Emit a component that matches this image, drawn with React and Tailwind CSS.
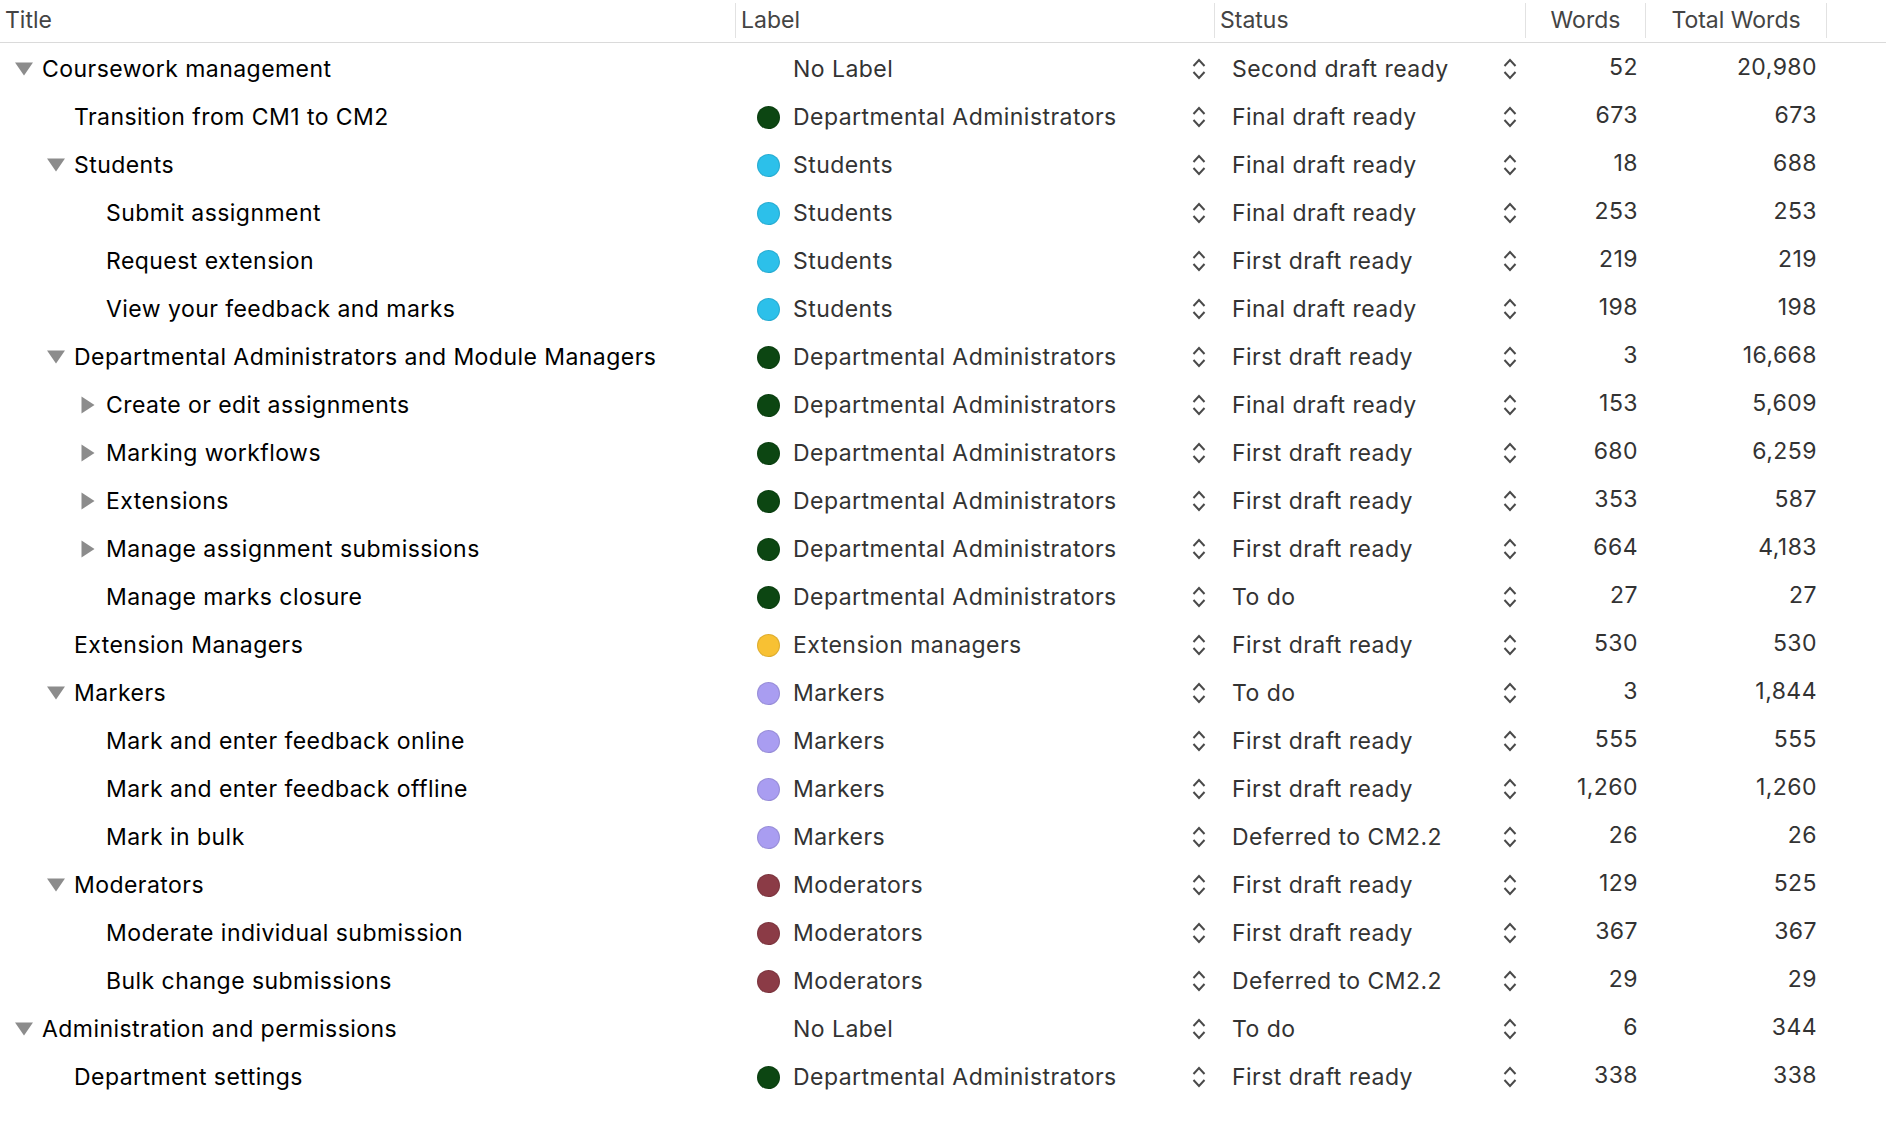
const LABELS = {
  none: { name: 'No Label', color: null },
  admin: { name: 'Departmental Administrators', color: '#0c4612' },
  students: { name: 'Students', color: '#2cc0ea' },
  ext: { name: 'Extension managers', color: '#f8c133' },
  markers: { name: 'Markers', color: '#a99df1' },
  mods: { name: 'Moderators', color: '#8b3b46' },
}

const ROWS = [
  { title: 'Coursework management', level: 0, toggle: 'open', label: 'none', status: 'Second draft ready', words: '52', total: '20,980' },
  { title: 'Transition from CM1 to CM2', level: 1, label: 'admin', status: 'Final draft ready', words: '673', total: '673' },
  { title: 'Students', level: 1, toggle: 'open', label: 'students', status: 'Final draft ready', words: '18', total: '688' },
  { title: 'Submit assignment', level: 2, label: 'students', status: 'Final draft ready', words: '253', total: '253' },
  { title: 'Request extension', level: 2, label: 'students', status: 'First draft ready', words: '219', total: '219' },
  { title: 'View your feedback and marks', level: 2, label: 'students', status: 'Final draft ready', words: '198', total: '198' },
  { title: 'Departmental Administrators and Module Managers', level: 1, toggle: 'open', label: 'admin', status: 'First draft ready', words: '3', total: '16,668' },
  { title: 'Create or edit assignments', level: 2, toggle: 'closed', label: 'admin', status: 'Final draft ready', words: '153', total: '5,609' },
  { title: 'Marking workflows', level: 2, toggle: 'closed', label: 'admin', status: 'First draft ready', words: '680', total: '6,259' },
  { title: 'Extensions', level: 2, toggle: 'closed', label: 'admin', status: 'First draft ready', words: '353', total: '587' },
  { title: 'Manage assignment submissions', level: 2, toggle: 'closed', label: 'admin', status: 'First draft ready', words: '664', total: '4,183' },
  { title: 'Manage marks closure', level: 2, label: 'admin', status: 'To do', words: '27', total: '27' },
  { title: 'Extension Managers', level: 1, label: 'ext', status: 'First draft ready', words: '530', total: '530' },
  { title: 'Markers', level: 1, toggle: 'open', label: 'markers', status: 'To do', words: '3', total: '1,844' },
  { title: 'Mark and enter feedback online', level: 2, label: 'markers', status: 'First draft ready', words: '555', total: '555' },
  { title: 'Mark and enter feedback offline', level: 2, label: 'markers', status: 'First draft ready', words: '1,260', total: '1,260' },
  { title: 'Mark in bulk', level: 2, label: 'markers', status: 'Deferred to CM2.2', words: '26', total: '26' },
  { title: 'Moderators', level: 1, toggle: 'open', label: 'mods', status: 'First draft ready', words: '129', total: '525' },
  { title: 'Moderate individual submission', level: 2, label: 'mods', status: 'First draft ready', words: '367', total: '367' },
  { title: 'Bulk change submissions', level: 2, label: 'mods', status: 'Deferred to CM2.2', words: '29', total: '29' },
  { title: 'Administration and permissions', level: 0, toggle: 'open', label: 'none', status: 'To do', words: '6', total: '344' },
  { title: 'Department settings', level: 1, label: 'admin', status: 'First draft ready', words: '338', total: '338' },
]

const INDENT = ['pl-[14px]', 'pl-[46px]', 'pl-[78px]']

function Disclosure({ state }) {
  if (state === 'open') {
    return (
      <svg width="20" height="14" viewBox="0 0 20 14">
        <polygon points="1,0.5 19,0.5 10,13.5" fill="#8c8c8c" />
      </svg>
    )
  }
  if (state === 'closed') {
    return (
      <svg width="20" height="18" viewBox="0 0 20 18">
        <polygon points="3.5,0.5 16.5,9 3.5,17.5" fill="#8c8c8c" />
      </svg>
    )
  }
  return null
}

function Stepper() {
  return (
    <svg width="14" height="24" viewBox="0 0 14 24" className="shrink-0">
      <path d="M1.5 9 L7 3 L12.5 9" fill="none" stroke="#4a4a4a" strokeWidth="2" />
      <path d="M1.5 15 L7 21 L12.5 15" fill="none" stroke="#4a4a4a" strokeWidth="2" />
    </svg>
  )
}

function Row({ row }) {
  const label = LABELS[row.label]
  return (
    <div className="flex h-[48px] items-center">
      <div className={`flex w-[735px] items-center ${INDENT[row.level]}`}>
        <div className="flex w-[20px] shrink-0 items-center justify-center">
          <Disclosure state={row.toggle} />
        </div>
        <span className="ml-[8px] text-black">{row.title}</span>
      </div>
      <div className="flex w-[479px] items-center pl-[22px] pr-[8px]">
        <div className="flex w-[23px] shrink-0 items-center">
          {label.color ? (
            <span
              className="block h-[23px] w-[23px] rounded-full border border-black/10"
              style={{ backgroundColor: label.color }}
            />
          ) : null}
        </div>
        <span className="ml-[13px] flex-1 text-[#333]">{label.name}</span>
        <Stepper />
      </div>
      <div className="flex w-[311px] items-center pl-[18px] pr-[8px]">
        <span className="flex-1 text-[#333]">{row.status}</span>
        <Stepper />
      </div>
      <div className="w-[120px] pr-[7px] text-right text-[#333] -translate-y-[2px]">{row.words}</div>
      <div className="w-[181px] pr-[9px] text-right text-[#333] -translate-y-[2px]">{row.total}</div>
    </div>
  )
}

export default function App() {
  return (
    <div
      className="min-h-screen w-full bg-white text-[23px] leading-none tracking-[0.45px]"
      style={{ fontFamily: 'Inter, "Noto Sans", sans-serif' }}
    >
      <div className="flex h-[43px] items-start border-b border-[#dadada] pt-[3px] tracking-normal text-[#444]">
        <div className="flex h-[35px] w-[735px] items-center pl-[5px]">Title</div>
        <div className="flex h-[35px] w-[479px] items-center border-l border-[#e2e2e2] pl-[5px]">Label</div>
        <div className="flex h-[35px] w-[311px] items-center border-l border-[#e2e2e2] pl-[5px]">Status</div>
        <div className="flex h-[35px] w-[120px] items-center justify-center border-l border-[#e2e2e2]">Words</div>
        <div className="flex h-[35px] w-[181px] items-center justify-center border-l border-[#e2e2e2]">Total Words</div>
        <div className="h-[35px] border-l border-[#e2e2e2]" />
      </div>
      <div className="pt-[2px]">
        {ROWS.map((row) => (
          <Row key={row.title} row={row} />
        ))}
      </div>
    </div>
  )
}
